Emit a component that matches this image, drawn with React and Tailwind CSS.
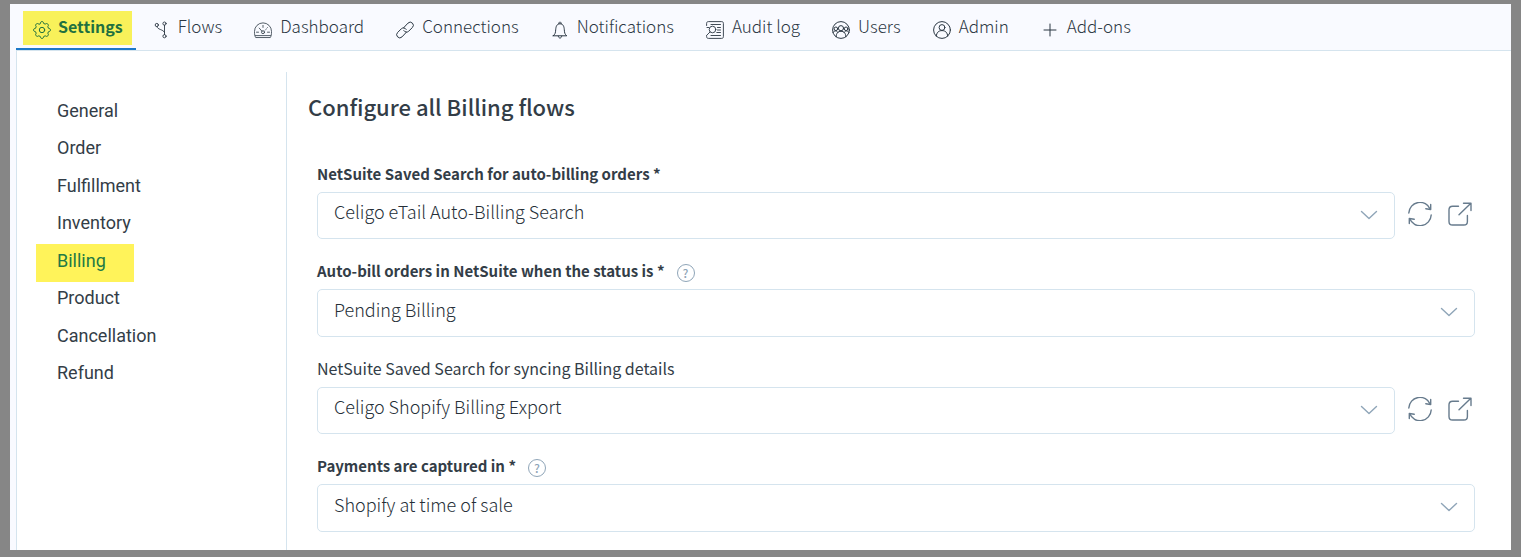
import React, { useState } from 'react';
import clsx from 'clsx';

const iconProps = {
  width: 18,
  height: 18,
  viewBox: '0 0 18 18',
  fill: 'none',
  stroke: 'currentColor',
  strokeLinecap: 'round',
  strokeLinejoin: 'round',
  'aria-hidden': true,
};

function SettingsIcon() {
  return (
    <svg {...iconProps}>
      <circle cx="9" cy="9" r="2.7" />
      <path d="M7.3 2.5C7.700 1.200 7.600.6 9 .6s1.300.6 1.700 1.900l1.500.6c1.200-.6 1.600-1 2.600 0s.6 1.400 0 2.600l.7 1.600c1.300.4 1.900.3 1.900 1.700s-.6 1.300-1.900 1.700l-.7 1.500c.6 1.200 1 1.600 0 2.600s-1.400.6-2.600 0l-1.500.7c-.4 1.300-.3 1.900-1.700 1.900s-1.300-.6-1.700-1.900l-1.500-.7c-1.200.6-1.600 1-2.600 0s-.6-1.400 0-2.600l-.7-1.500C1.200 10.300.6 10.400.6 9s.6-1.300 1.900-1.700l.7-1.600c-.6-1.200-1-1.600 0-2.600s1.400-.6 2.600 0z" />
    </svg>
  );
}

function FlowsIcon() {
  return (
    <svg {...iconProps} strokeWidth="0.9">
      <circle cx="4.800" cy="4" r="1.600" />
      <circle cx="12.500" cy="2.600" r="1.600" />
      <circle cx="12.500" cy="15.200" r="1.600" />
      <path d="M12.500 4.200v9.400M5 5.600c.4 3.400 6 2.400 7.500 5.800" />
    </svg>
  );
}

function DashboardIcon() {
  return (
    <svg {...iconProps} strokeWidth="0.8">
      <path d="M1.500 16.200C.7 14.800.5 13.400.5 10.400a8.500 8.500 0 0 1 17 0c0 3-.2 4.400-1 5.800zM1.500 14.600h15" />
      <circle cx="9" cy="11.200" r="1.500" />
      <path d="M7.900 10.100 5.200 7.100M9 4.400v2M12.800 7.200l.6-.6M2.500 11.200h2M13.500 11.200h2M11.300 9.100l.6-.6" />
    </svg>
  );
}

function ConnectionsIcon() {
  return (
    <svg {...iconProps}>
      <path d="M7.600 6.800 12 2.100a3.100 3.100 0 0 1 4.400 4.400l-3.700 3.700a3.100 3.100 0 0 1-4.900-.6" />
      <path d="M10.400 11.200 6 15.900a3.100 3.100 0 0 1-4.400-4.400l3.700-3.700a3.100 3.100 0 0 1 4.900.6" />
    </svg>
  );
}

function BellIcon() {
  return (
    <svg {...iconProps}>
      <path d="M2.200 14.800h13.600c-2-1.500-2.300-3-2.500-6C13.100 5.200 12 2.800 9 2.800S4.900 5.200 4.700 8.800c-.2 3-.5 4.500-2.500 6z" />
      <path d="M7.800 2.700c-.2-2.400 2.600-2.400 2.400 0M7.300 15.200c.2 2.600 3.200 2.600 3.400 0" />
    </svg>
  );
}

function AuditIcon() {
  return (
    <svg {...iconProps} strokeWidth="0.9">
      <path d="M.6 4.500V2.400C.6 1.200 1.300.6 2.400.6h13.200c1.200 0 1.800.6 1.800 1.800v13.200c0 1.200-.6 1.800-1.800 1.800H2.400c-1.100 0-1.800-.6-1.800-1.800v-1.100" />
      <circle cx="6.500" cy="8.500" r="3.300" />
      <path d="m4 11-3 3M1 6.500h1.800M5 3.500h9.500M11.500 6.500h3M11.500 9h3M10.800 11.500h3.700M5 14.500h9.500" />
    </svg>
  );
}

function UsersIcon() {
  return (
    <svg {...iconProps}>
      <circle cx="9" cy="9" r="8.400" />
      <circle cx="9" cy="7.200" r="2.600" />
      <path d="M4.200 15.800c0-3.700 1.800-5.500 4.800-5.500s4.800 1.800 4.800 5.500" />
      <circle cx="3.900" cy="7.800" r="1.800" />
      <circle cx="14.100" cy="7.800" r="1.800" />
      <path d="M1 11.500c1.500-2.200 3.700-2.200 5 0M12 11.500c1.300-2.200 3.500-2.200 5 0" />
    </svg>
  );
}

function AdminIcon() {
  return (
    <svg {...iconProps}>
      <circle cx="9" cy="9" r="8.400" />
      <circle cx="9" cy="6.500" r="2.900" />
      <path d="M3.300 15.100c.3-3.600 2.300-5.500 5.700-5.500s5.400 1.900 5.700 5.500" />
    </svg>
  );
}

function PlusIcon() {
  return (
    <svg {...iconProps}>
      <path d="M9 3v12M3 9h12" />
    </svg>
  );
}

function RefreshIcon() {
  return (
    <svg {...iconProps} width="24" height="24" viewBox="0 0 24 24" strokeWidth="1.400">
      <path d="M.8 11A11.200 11.200 0 0 1 22.300 7.200M23.200 13A11.200 11.200 0 0 1 1.700 16.800" />
      <path d="M22.700 2.500v5l-4.900-.8M1.300 21.500v-5l4.900.8" />
    </svg>
  );
}

function OpenIcon() {
  return (
    <svg {...iconProps} width="24" height="24" viewBox="0 0 24 24" strokeWidth="1.400">
      <path d="M10.500 4.200H4.600C2.300 4.200 1 5.500 1 7.800v11.600C1 21.700 2.300 23 4.600 23h11.200c2.300 0 3.600-1.300 3.600-3.600v-6" />
      <path d="M11 12.800 22.600 1.400M15.500 1.200h7.500v7.300" />
    </svg>
  );
}

function ChevronIcon() {
  return (
    <svg {...iconProps} viewBox="0 0 18 10" height="10" strokeWidth="1.400" className="pointer-events-none absolute right-[17px] top-[18px]">
      <path d="m1.500 1.500 7.500 7 7.500-7" />
    </svg>
  );
}

const tabs = [
  { id: 'settings', label: 'Settings', icon: SettingsIcon },
  { id: 'flows', label: 'Flows', icon: FlowsIcon },
  { id: 'dashboard', label: 'Dashboard', icon: DashboardIcon },
  { id: 'connections', label: 'Connections', icon: ConnectionsIcon },
  { id: 'notifications', label: 'Notifications', icon: BellIcon },
  { id: 'audit', label: 'Audit log', icon: AuditIcon },
  { id: 'users', label: 'Users', icon: UsersIcon },
  { id: 'admin', label: 'Admin', icon: AdminIcon },
  { id: 'addons', label: 'Add-ons', icon: PlusIcon },
];

const sections = ['General', 'Order', 'Fulfillment', 'Inventory', 'Billing', 'Product', 'Cancellation', 'Refund'];

const fields = [
  { id: 'billing-search', label: 'NetSuite Saved Search for auto-billing orders', required: true, value: 'Celigo eTail Auto-Billing Search', actions: true },
  { id: 'billing-status', label: 'Auto-bill orders in NetSuite when the status is', required: true, value: 'Pending Billing', help: true },
  { id: 'sync-search', label: 'NetSuite Saved Search for syncing Billing details', value: 'Celigo Shopify Billing Export', actions: true },
  { id: 'payments', label: 'Payments are captured in', required: true, value: 'Shopify at time of sale', help: true },
];

function Tab({ tab, active, onSelect }) {
  const Icon = tab.icon;
  return (
    <a
      href={`#${tab.id}`}
      onClick={onSelect}
      aria-current={active ? 'page' : undefined}
      className={clsx(
        'flex items-start whitespace-nowrap border-b-2 pt-[7px]',
        active ? 'border-[#1c78c8] pl-[7px] pr-1' : 'border-transparent px-4'
      )}
    >
      <span
        className={clsx(
          'flex h-[34px] items-center',
          active
            ? 'gap-[7px] bg-[#f8f15a] pl-[10px] pr-[9px] text-base font-bold text-[#1f7040]'
            : 'gap-2 text-[17px] font-light'
        )}
      >
        <span className="mt-1">
          <Icon />
        </span>
        <span className="pb-1">{tab.label}</span>
      </span>
    </a>
  );
}

function Field({ field }) {
  return (
    <div>
      <div className="flex h-[27px] items-start gap-3">
        <label
          htmlFor={field.id}
          className={field.required ? 'text-[15px] leading-[18px] font-bold' : 'text-base leading-4'}
        >
          {field.label}
          {field.required && ' *'}
        </label>
        {field.help && (
          <button
            type="button"
            aria-label={`Help: ${field.label}`}
            className="mt-[2px] flex size-[18px] items-center justify-center rounded-full border border-[#8fa5b8] text-xs font-medium text-[#8fa5b8]"
          >
            ?
          </button>
        )}
      </div>
      <div className="flex items-center">
        <div className="relative flex-1 text-[#8fa5b8]">
          <select
            id={field.id}
            defaultValue={field.value}
            className={clsx(
              'block w-full appearance-none rounded-[5px] border border-[#d5e4ee] bg-white pb-[9px] pl-4 pr-10 text-lg font-light text-[#262f38]',
              field.actions ? 'h-[47px]' : 'h-12'
            )}
          >
            <option>{field.value}</option>
          </select>
          <ChevronIcon />
        </div>
        {field.actions && (
          <div className="flex gap-4 pb-[3px] pl-[13px] pr-[3px] text-[#677b8d]">
            <button type="button" aria-label="Refresh">
              <RefreshIcon />
            </button>
            <button type="button" aria-label="Open in NetSuite">
              <OpenIcon />
            </button>
          </div>
        )}
      </div>
    </div>
  );
}

function App() {
  const [activeTab, setActiveTab] = useState('settings');
  const [activeSection, setActiveSection] = useState('Billing');

  return (
    <div className="flex min-h-screen bg-[#868686] px-[10px] pb-[7px] pt-1 font-['Source_Sans_Pro','Noto_Sans_CJK_SC',sans-serif] text-[#333d47]">
      <div className="flex flex-1 flex-col bg-[#f9faff] pl-[6px]">
        {/* Top tabs */}
        <nav className="flex h-[47px] border-b border-[#d5e4ee] text-[#2b3743]">
          {tabs.map((tab) => (
            <Tab
              key={tab.id}
              tab={tab}
              active={tab.id === activeTab}
              onSelect={() => setActiveTab(tab.id)}
            />
          ))}
        </nav>

        <div className="flex flex-1 border-l border-[#d5e4ee] bg-white">
          {/* Sidebar */}
          <aside className="w-[269px] shrink-0 pl-[19px] pt-[43px]">
            <ul className="grid h-[300px] grid-rows-8 font-[Roboto,sans-serif] text-lg">
              {sections.map((section) => (
                <li key={section}>
                  <a
                    href={`#${section.toLowerCase()}`}
                    onClick={() => setActiveSection(section)}
                    className={clsx(
                      'inline-flex h-full items-center pb-1 pl-[21px] pr-7',
                      section === activeSection && 'bg-[#fff35a] text-[#227a45]'
                    )}
                  >
                    {section}
                  </a>
                </li>
              ))}
            </ul>
          </aside>

          {/* Settings form */}
          <main className="mt-[21px] flex-1 border-l border-[#d5e4ee] pb-[18px] pl-[21px] pr-9">
            <h1 className="pt-4 text-[22px] leading-9 font-medium">Configure all Billing flows</h1>
            <form className="flex flex-col gap-[23px] pl-[9px] pt-[41px]">
              {fields.map((field) => (
                <Field key={field.id} field={field} />
              ))}
            </form>
          </main>
        </div>
      </div>
    </div>
  );
}

export default App;
